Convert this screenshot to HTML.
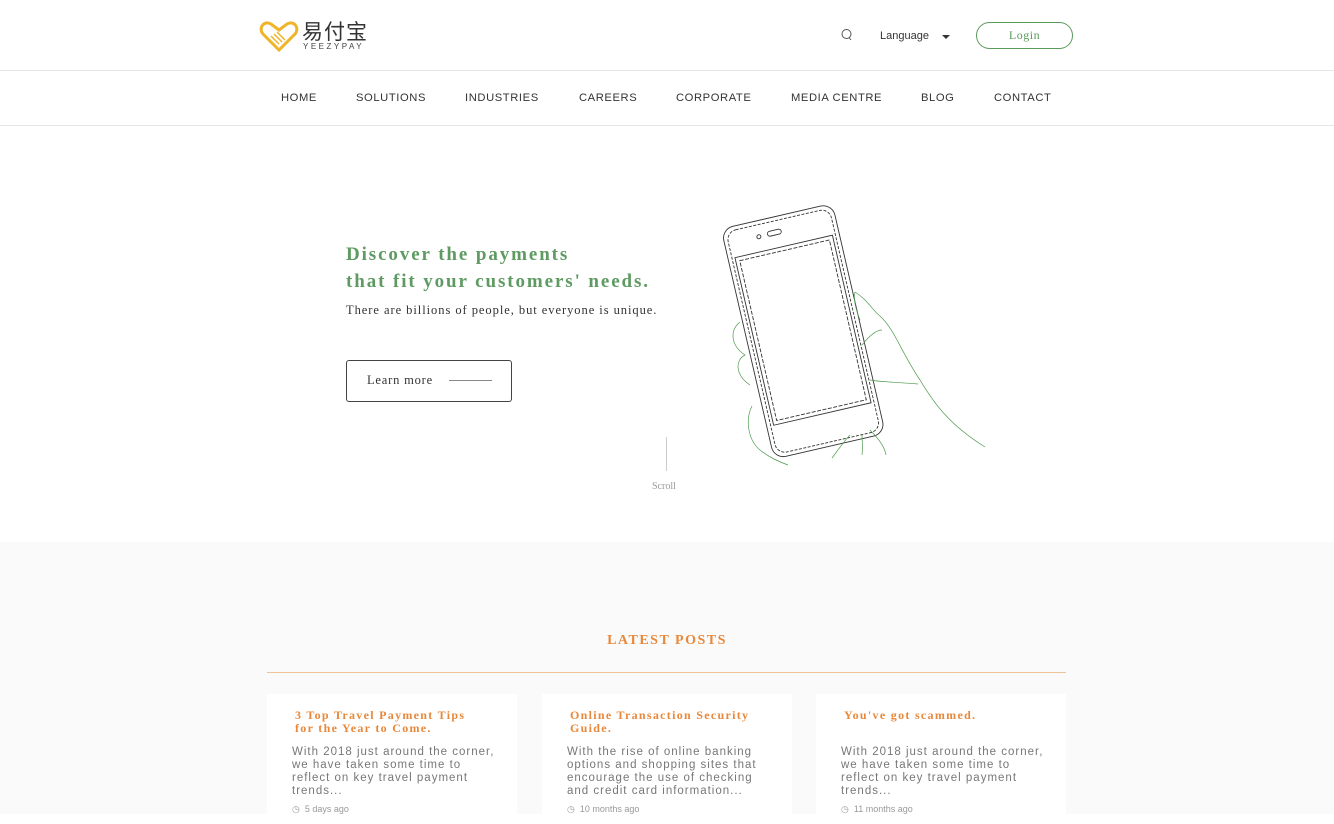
<!DOCTYPE html>
<html><head><meta charset="utf-8"><style>
*{margin:0;padding:0;box-sizing:border-box}
body{width:1334px;height:814px;overflow:hidden;background:#fff;font-family:"Liberation Sans",sans-serif;position:relative}
.abs{position:absolute}
.nav a{position:absolute;top:92px;font-size:11.2px;color:#333;letter-spacing:.6px}
.serif{font-family:"Liberation Serif",serif}
.card{position:absolute;top:694px;width:250px;height:130px;background:#fff}
.card h4{position:absolute;left:28px;top:15px;font-family:"Liberation Serif",serif;font-size:12px;color:#e8883a;letter-spacing:1.3px;line-height:13px;font-weight:bold}
.card p{position:absolute;left:25px;top:52px;font-size:11.5px;color:#777;letter-spacing:1px;line-height:13px;width:205px}
.card span{position:absolute;left:25px;top:110px;font-size:9px;color:#999}
</style></head><body>
<svg class="abs" style="left:259px;top:20px" width="42" height="32" viewBox="0 0 42 32">
<path d="M20 30 L4 14 C-1 8 5 0 12 4 L20 10 L28 4 C35 0 41 8 36 14 Z" fill="none" stroke="#f0b429" stroke-width="3"/>
<path d="M12 16 L20 24 M15 14 L23 22 M18 12 L26 20" stroke="#f0b429" stroke-width="1.5"/>
</svg>
<div class="abs" style="left:302px;top:18px;font-family:'Noto Sans CJK SC',sans-serif;font-size:21px;color:#333;line-height:26px;letter-spacing:1px">易付宝</div>
<div class="abs" style="left:303px;top:42px;font-size:8px;color:#444;letter-spacing:2.5px">YEEZYPAY</div>
<svg class="abs" style="left:840px;top:28px" width="14" height="14"><circle cx="6.5" cy="6" r="4.5" fill="none" stroke="#555" stroke-width="1"/><path d="M9 9.5 L11 12" stroke="#555"/></svg>
<div class="abs" style="left:880px;top:30px;font-size:11px;color:#333">Language</div>
<div class="abs" style="left:942px;top:35px;width:0;height:0;border-left:4px solid transparent;border-right:4px solid transparent;border-top:4px solid #333"></div>
<div class="abs serif" style="left:976px;top:22px;width:97px;height:27px;border:1px solid #5a9a5a;border-radius:14px;text-align:center;line-height:25px;font-size:12px;color:#5a9a5a;letter-spacing:.5px">Login</div>
<div class="abs" style="left:0;top:70px;width:1334px;height:1px;background:#e6e6e6"></div>
<div class="nav">
<a style="left:281px">HOME</a><a style="left:356px">SOLUTIONS</a><a style="left:465px">INDUSTRIES</a><a style="left:579px">CAREERS</a><a style="left:676px">CORPORATE</a><a style="left:791px">MEDIA CENTRE</a><a style="left:921px">BLOG</a><a style="left:994px">CONTACT</a>
</div>
<div class="abs" style="left:0;top:125px;width:1334px;height:1px;background:#e6e6e6"></div>
<div class="abs serif" style="left:346px;top:241px;font-size:19px;font-weight:bold;color:#5e9a62;line-height:27px;letter-spacing:1.9px">Discover the payments<br>that fit your customers' needs.</div>
<div class="abs serif" style="left:346px;top:303px;font-size:12.5px;color:#333;letter-spacing:.95px">There are billions of people, but everyone is unique.</div>
<div class="abs" style="left:346px;top:360px;width:166px;height:42px;border:1px solid #444;border-radius:3px"></div>
<div class="abs serif" style="left:367px;top:373px;font-size:12.5px;color:#333;letter-spacing:.8px">Learn more</div>
<div class="abs" style="left:449px;top:380px;width:43px;height:1px;background:#888"></div>
<div class="abs" style="left:666px;top:437px;width:1px;height:34px;background:#ccc"></div>
<div class="abs serif" style="left:652px;top:481px;font-size:10px;color:#999">Scroll</div>
<svg class="abs" style="left:680px;top:190px" width="320" height="290" viewBox="680 190 320 290">
<g transform="rotate(-13 804 330)" fill="none" stroke="#333" stroke-width="0.9">
<rect x="746" y="213" width="114" height="236" rx="12"/>
<rect x="750" y="217" width="106" height="228" rx="10" stroke-dasharray="3 1.5"/>
<rect x="753" y="244" width="100" height="172"/>
<rect x="757" y="248" width="92" height="164" stroke-dasharray="4 1.5"/>
<circle cx="781" cy="229" r="2"/>
<rect x="790" y="226" width="14" height="5" rx="2.5"/>
</g>
<g fill="none" stroke="#4e9a4e" stroke-width="0.7">
<path d="M855 292 C868 300 872 310 880 316 C895 330 900 350 920 380 C935 405 950 425 985 447"/>
<path d="M855 292 C853 300 856 310 860 320"/>
<path d="M862 345 C870 335 877 330 882 330"/>
<path d="M870 380 C880 382 895 382 918 384"/>
<path d="M740 322 C730 330 730 345 745 355 C735 360 735 375 750 385"/>
<path d="M752 406 C745 420 748 440 760 450 C770 458 780 462 788 465"/>
<path d="M832 458 C838 450 845 440 850 435"/>
<path d="M862 455 C863 447 862 440 862 435"/>
<path d="M870 430 C880 440 885 448 886 455"/>
</g>
</svg>
<div class="abs" style="left:0;top:542px;width:1334px;height:272px;background:#fafafa"></div>
<div class="abs serif" style="left:0;top:633px;width:1334px;text-align:center;font-size:14px;font-weight:bold;color:#e8883a;letter-spacing:1.5px">LATEST POSTS</div>
<div class="abs" style="left:267px;top:672px;width:799px;height:1px;background:#f0c49a"></div>
<div class="card" style="left:267px"><h4>3 Top Travel Payment Tips<br>for the Year to Come.</h4><p>With 2018 just around the corner, we have taken some time to reflect on key travel payment trends...</p><span>◷ &nbsp;5 days ago</span></div>
<div class="card" style="left:542px"><h4>Online Transaction Security<br>Guide.</h4><p>With the rise of online banking options and shopping sites that encourage the use of checking and credit card information...</p><span>◷ &nbsp;10 months ago</span></div>
<div class="card" style="left:816px"><h4>You've got scammed.</h4><p>With 2018 just around the corner, we have taken some time to reflect on key travel payment trends...</p><span>◷ &nbsp;11 months ago</span></div>
</body></html>
